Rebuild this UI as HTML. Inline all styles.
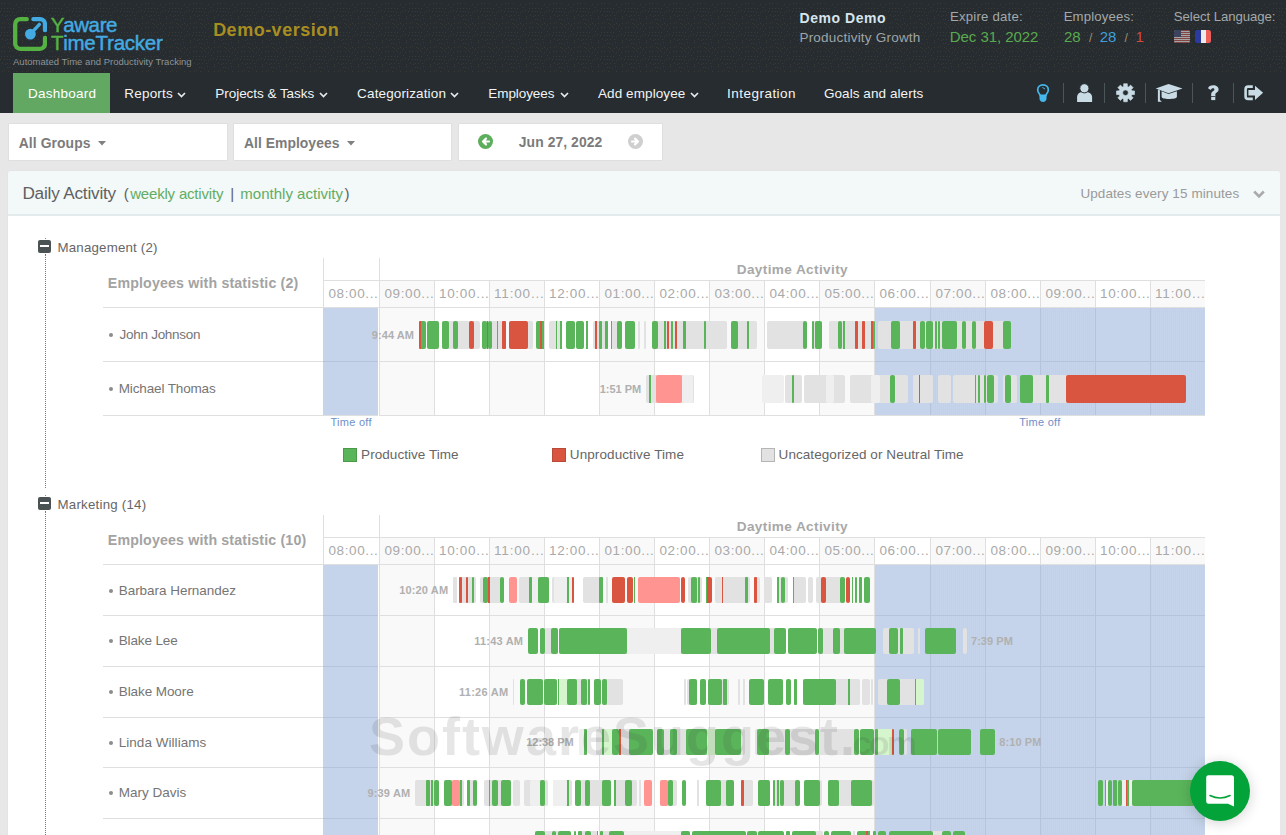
<!DOCTYPE html><html><head><meta charset="utf-8"><style>
*{margin:0;padding:0;box-sizing:border-box}
html,body{width:1286px;height:835px;overflow:hidden;background:#e7e7e7;font-family:"Liberation Sans",sans-serif}
.t{position:absolute;white-space:nowrap}
.r{position:absolute}
.a{position:absolute}
</style></head><body>
<div class="r" style="left:0px;top:0px;width:1286px;height:113px;background:#262c2f;"></div><svg class="a" style="left:0;top:3px" width="1286" height="69"><defs><pattern id="dp" width="24" height="24" patternUnits="userSpaceOnUse"><g fill="#3a3934"><rect x="1" y="0" width="1" height="1"/><rect x="4" y="0" width="1" height="1"/><rect x="9" y="0" width="1" height="1"/><rect x="12" y="23" width="1" height="1"/><rect x="16" y="1" width="1" height="1"/><rect x="18" y="23" width="1" height="1"/><rect x="21" y="1" width="1" height="1"/><rect x="1" y="5" width="1" height="1"/><rect x="4" y="5" width="1" height="1"/><rect x="7" y="5" width="1" height="1"/><rect x="10" y="5" width="1" height="1"/><rect x="13" y="5" width="1" height="1"/><rect x="19" y="4" width="1" height="1"/><rect x="0" y="8" width="1" height="1"/><rect x="4" y="8" width="1" height="1"/><rect x="7" y="8" width="1" height="1"/><rect x="9" y="8" width="1" height="1"/><rect x="12" y="9" width="1" height="1"/><rect x="16" y="9" width="1" height="1"/><rect x="18" y="8" width="1" height="1"/><rect x="21" y="7" width="1" height="1"/><rect x="2" y="12" width="1" height="1"/><rect x="5" y="13" width="1" height="1"/><rect x="7" y="12" width="1" height="1"/><rect x="10" y="12" width="1" height="1"/><rect x="14" y="12" width="1" height="1"/><rect x="22" y="13" width="1" height="1"/><rect x="7" y="16" width="1" height="1"/><rect x="9" y="16" width="1" height="1"/><rect x="12" y="17" width="1" height="1"/><rect x="15" y="15" width="1" height="1"/><rect x="22" y="15" width="1" height="1"/><rect x="2" y="20" width="1" height="1"/><rect x="4" y="19" width="1" height="1"/><rect x="8" y="20" width="1" height="1"/><rect x="10" y="21" width="1" height="1"/><rect x="14" y="21" width="1" height="1"/><rect x="16" y="20" width="1" height="1"/><rect x="19" y="21" width="1" height="1"/><rect x="22" y="20" width="1" height="1"/></g></pattern></defs><rect width="1286" height="69" fill="url(#dp)"/></svg><svg class="a" style="left:13px;top:17px" width="34" height="34" viewBox="0 0 34 34">
<path d="M13.8 2.15 H7.2 A5 5 0 0 0 2.2 7.15 V26.8 A5 5 0 0 0 7.2 31.8 H27 A5 5 0 0 0 32 26.8 V20.8" fill="none" stroke="#56b143" stroke-width="4.3" stroke-linecap="round"/>
<path d="M20.4 2.15 H27 A5 5 0 0 1 32 7.15 V13.2" fill="none" stroke="#43aae2" stroke-width="4.3" stroke-linecap="round"/>
<line x1="17.4" y1="17.1" x2="26.4" y2="7.4" stroke="#43aae2" stroke-width="3.4" stroke-linecap="round"/>
<circle cx="17.4" cy="17.1" r="5.4" fill="#43aae2"/>
</svg><div class="t" style="left:50.79px;top:12.25px;font-size:20.5px;line-height:25px;color:#56b143;-webkit-text-stroke:0.45px currentColor;">Y</div><div class="t" style="left:63.18px;top:12.25px;font-size:20.5px;line-height:25px;color:#43aae2;letter-spacing:-0.380px;-webkit-text-stroke:0.45px currentColor;">aware</div><div class="t" style="left:50.89px;top:30.25px;font-size:20.5px;line-height:25px;color:#56b143;-webkit-text-stroke:0.45px currentColor;">T</div><div class="t" style="left:63.17px;top:30.25px;font-size:20.5px;line-height:25px;color:#43aae2;letter-spacing:-0.227px;-webkit-text-stroke:0.45px currentColor;">imeTracker</div><div class="t" style="left:13.00px;top:56.25px;font-size:9.5px;line-height:11px;color:#8d9599;letter-spacing:0.018px;">Automated Time and Productivity Tracking</div><div class="t" style="left:213.13px;top:19.25px;font-size:18px;line-height:22px;color:#a88e22;font-weight:bold;letter-spacing:0.499px;">Demo-version</div><div class="t" style="left:799.59px;top:9.75px;font-size:14px;line-height:17px;color:#d6e5ee;font-weight:bold;letter-spacing:0.535px;">Demo Demo</div><div class="t" style="left:799.42px;top:29.75px;font-size:13.5px;line-height:16px;color:#9fa5a8;letter-spacing:0.217px;">Productivity Growth</div><div class="t" style="left:949.94px;top:8.75px;font-size:13.2px;line-height:16px;color:#a3a9ab;letter-spacing:0.211px;">Expire date:</div><div class="t" style="left:949.80px;top:27.75px;font-size:15px;line-height:18px;color:#5aaa4f;letter-spacing:-0.055px;">Dec 31, 2022</div><div class="t" style="left:1063.64px;top:8.75px;font-size:13.2px;line-height:16px;color:#a3a9ab;letter-spacing:0.149px;">Employees:</div><div class="t" style="left:1063.95px;top:27.75px;font-size:15px;line-height:18px;color:#5aaa4f;">28</div><div class="t" style="left:1089.00px;top:31.25px;font-size:12px;line-height:14px;color:#a08f70;">/</div><div class="t" style="left:1099.75px;top:27.75px;font-size:15px;line-height:18px;color:#3f9fdc;">28</div><div class="t" style="left:1124.50px;top:31.25px;font-size:12px;line-height:14px;color:#a08f70;">/</div><div class="t" style="left:1135.38px;top:27.75px;font-size:15px;line-height:18px;color:#d44a3e;">1</div><div class="t" style="left:1173.81px;top:8.75px;font-size:13.2px;line-height:16px;color:#a3a9ab;letter-spacing:-0.061px;">Select Language:</div><svg class="a" style="left:1174px;top:30px;opacity:0.62" width="16" height="13" viewBox="0 0 16 13">
<defs><clipPath id="cf1"><rect x="0" y="0" width="16" height="13" rx="2.5"/></clipPath></defs>
<g clip-path="url(#cf1)"><rect width="16" height="13" fill="#f2eeee"/>
<rect y="0" width="16" height="1" fill="#b8544e"/><rect y="2" width="16" height="1" fill="#b8544e"/><rect y="4" width="16" height="1" fill="#b8544e"/><rect y="6" width="16" height="1" fill="#b8544e"/><rect y="8" width="16" height="1" fill="#b8544e"/><rect y="10" width="16" height="1" fill="#b8544e"/><rect y="12" width="16" height="1" fill="#b8544e"/>
<rect width="7" height="7" fill="#47507a"/></g></svg><svg class="a" style="left:1195px;top:30px" width="16" height="13" viewBox="0 0 16 13">
<defs><clipPath id="cf2"><rect x="0" y="0" width="16" height="13" rx="2.5"/></clipPath></defs>
<g clip-path="url(#cf2)"><rect width="6" height="13" fill="#2a3a9e"/><rect x="6" width="5" height="13" fill="#ececec"/><rect x="11" width="5" height="13" fill="#ec5f5a"/></g></svg><div class="r" style="left:13px;top:73px;width:97px;height:40px;background:#62a862;"></div><div class="t" style="left:27.92px;top:85.75px;font-size:13.5px;line-height:16px;color:#ffffff;letter-spacing:0.243px;">Dashboard</div><div class="t" style="left:124.32px;top:85.75px;font-size:13.5px;line-height:16px;color:#f2f4f5;letter-spacing:0.184px;">Reports</div><svg class="a" style="left:177px;top:91.5px" width="9" height="6" viewBox="0 0 9 6"><path d="M1 1 L4.5 4.5 L8 1" fill="none" stroke="#e8eaeb" stroke-width="1.7"/></svg><div class="t" style="left:215.32px;top:85.75px;font-size:13.5px;line-height:16px;color:#f2f4f5;letter-spacing:-0.041px;">Projects &amp; Tasks</div><svg class="a" style="left:319.4px;top:91.5px" width="9" height="6" viewBox="0 0 9 6"><path d="M1 1 L4.5 4.5 L8 1" fill="none" stroke="#e8eaeb" stroke-width="1.7"/></svg><div class="t" style="left:357.12px;top:85.75px;font-size:13.5px;line-height:16px;color:#f2f4f5;letter-spacing:0.134px;">Categorization</div><svg class="a" style="left:450px;top:91.5px" width="9" height="6" viewBox="0 0 9 6"><path d="M1 1 L4.5 4.5 L8 1" fill="none" stroke="#e8eaeb" stroke-width="1.7"/></svg><div class="t" style="left:488.32px;top:85.75px;font-size:13.5px;line-height:16px;color:#f2f4f5;letter-spacing:-0.076px;">Employees</div><svg class="a" style="left:559.6px;top:91.5px" width="9" height="6" viewBox="0 0 9 6"><path d="M1 1 L4.5 4.5 L8 1" fill="none" stroke="#e8eaeb" stroke-width="1.7"/></svg><div class="t" style="left:598.00px;top:85.75px;font-size:13.5px;line-height:16px;color:#f2f4f5;letter-spacing:0.086px;">Add employee</div><svg class="a" style="left:690px;top:91.5px" width="9" height="6" viewBox="0 0 9 6"><path d="M1 1 L4.5 4.5 L8 1" fill="none" stroke="#e8eaeb" stroke-width="1.7"/></svg><div class="t" style="left:727.08px;top:85.75px;font-size:13.5px;line-height:16px;color:#f2f4f5;letter-spacing:0.470px;">Integration</div><div class="t" style="left:823.93px;top:85.75px;font-size:13.5px;line-height:16px;color:#f2f4f5;letter-spacing:0.071px;">Goals and alerts</div><div class="r" style="left:1063px;top:83px;width:1px;height:20px;background:#4e5559;"></div><div class="r" style="left:1104px;top:83px;width:1px;height:20px;background:#4e5559;"></div><div class="r" style="left:1145px;top:83px;width:1px;height:20px;background:#4e5559;"></div><div class="r" style="left:1192px;top:83px;width:1px;height:20px;background:#4e5559;"></div><div class="r" style="left:1233px;top:83px;width:1px;height:20px;background:#4e5559;"></div><svg class="a" style="left:1035px;top:83px" width="16" height="20" viewBox="0 0 16 20">
<path d="M8 1.9 C4.6 1.9 2.7 4.3 2.7 6.9 C2.7 9 3.9 10.2 4.9 11.6 L5 12.4 H11 L11.1 11.6 C12.1 10.2 13.3 9 13.3 6.9 C13.3 4.3 11.4 1.9 8 1.9 Z" fill="none" stroke="#45b7ec" stroke-width="1.7"/>
<path d="M4.5 12.4 H11.5 V15.6 C11.5 17.6 10 19 8 19 C6 19 4.5 17.6 4.5 15.6 Z" fill="#45b7ec"/>
<path d="M7.4 4.4 L10 6" stroke="#45b7ec" stroke-width="1"/>
</svg><svg class="a" style="left:1076px;top:83px" width="18" height="20" viewBox="0 0 18 20">
<path d="M1.1 19 V14.2 C1.1 11.5 3 9.2 5.6 9.2 H11.2 C13.8 9.2 16.1 11.5 16.1 14.2 V19 Z" fill="#c9dce5"/>
<circle cx="8.4" cy="5.3" r="4.6" fill="#c9dce5" stroke="#262c2f" stroke-width="1"/>
</svg><svg class="a" style="left:1116px;top:83px" width="19" height="20" viewBox="0 0 19 20">
<path fill-rule="evenodd" d="M18.52,7.92 L18.52,11.58 L15.82,11.64 L15.31,12.89 L17.17,14.83 L14.58,17.42 L12.64,15.56 L11.39,16.07 L11.33,18.77 L7.67,18.77 L7.61,16.07 L6.36,15.56 L4.42,17.42 L1.83,14.83 L3.69,12.89 L3.18,11.64 L0.48,11.58 L0.48,7.92 L3.18,7.86 L3.69,6.61 L1.83,4.67 L4.42,2.08 L6.36,3.94 L7.61,3.43 L7.67,0.73 L11.33,0.73 L11.39,3.43 L12.64,3.94 L14.58,2.08 L17.17,4.67 L15.31,6.61 L15.82,7.86 Z M12.3,9.75 A2.8 2.8 0 1 0 6.7,9.75 A2.8 2.8 0 1 0 12.3,9.75 Z" fill="#c9dce5" stroke="#c9dce5" stroke-width="0.6" stroke-linejoin="round"/>
</svg><svg class="a" style="left:1155px;top:83px" width="28" height="20" viewBox="0 0 28 20">
<path d="M0.7 5.6 L13.5 1 L27.5 5.6 L13.5 10.3 Z" fill="#c9dce5"/>
<path d="M6.6 8.3 L13.5 10.9 L21.9 8.3 V13.7 C21.9 15.4 18 15.9 13.8 15.9 C9.5 15.9 6.6 15.2 6.6 13.7 Z" fill="#c9dce5"/>
<path d="M2.9 6.5 L2.9 18.8 H6.9 L4.9 17 V7.3 Z" fill="#c9dce5"/>
</svg><svg class="a" style="left:1206px;top:83px" width="15" height="20" viewBox="0 0 15 20">
<path d="M2 5.2 C2.6 3.2 4.5 2.2 7.3 2.2 C10.4 2.2 12.6 3.9 12.6 6.5 C12.6 9.2 9.6 9.8 9.3 11.4 V12.6 H5.2 V11 C5.2 8.6 8.4 7.9 8.4 6.5 C8.4 5.6 7.8 5.3 7 5.3 C6 5.3 5.3 6 4.7 6.9 Z" fill="#c9dce5"/>
<rect x="5.2" y="12" width="4.1" height="5.1" fill="#c9dce5"/><rect x="5" y="13.1" width="4.5" height="0.9" fill="#3a4144"/>
</svg><svg class="a" style="left:1243px;top:83px" width="22" height="20" viewBox="0 0 22 20">
<path d="M9.8 3.6 H5.2 C3.8 3.6 2.6 4.7 2.6 6.2 V13.4 C2.6 14.9 3.8 15.9 5.2 15.9 H9.8" fill="none" stroke="#c9dce5" stroke-width="2.6"/>
<path d="M5.4 7 H12 V2.7 L20.1 9.7 L12 17.1 V12.6 H5.4 Z" fill="#c9dce5"/>
</svg><div class="r" style="left:8px;top:123px;width:220px;height:38px;background:#fff;border:1px solid #dfdfdf;border-radius:1px"></div><div class="r" style="left:233px;top:123px;width:219px;height:38px;background:#fff;border:1px solid #dfdfdf;border-radius:1px"></div><div class="r" style="left:458px;top:123px;width:205px;height:38px;background:#fff;border:1px solid #dfdfdf;border-radius:1px"></div><div class="t" style="left:18.65px;top:134.75px;font-size:13.9px;line-height:17px;color:#7b7b7b;font-weight:bold;letter-spacing:0.097px;">All Groups</div><svg class="a" style="left:98px;top:140.7px" width="8" height="5" viewBox="0 0 8 5"><path d="M0 0 H8 L4 4.5 Z" fill="#808080"/></svg><div class="t" style="left:243.95px;top:134.75px;font-size:13.9px;line-height:17px;color:#7b7b7b;font-weight:bold;letter-spacing:0.041px;">All Employees</div><svg class="a" style="left:347px;top:140.7px" width="8" height="5" viewBox="0 0 8 5"><path d="M0 0 H8 L4 4.5 Z" fill="#808080"/></svg><div class="t" style="left:518.79px;top:133.75px;font-size:13.9px;line-height:17px;color:#7b7b7b;font-weight:bold;letter-spacing:0.075px;">Jun 27, 2022</div><svg class="a" style="left:478px;top:134.3px" width="15" height="15" viewBox="0 0 15 15"><circle cx="7.5" cy="7.5" r="7.5" fill="#5cae5c"/><path d="M11 7.5 H5.6 M8 4.6 L5 7.5 L8 10.4" fill="none" stroke="#fff" stroke-width="2.2" stroke-linecap="round" stroke-linejoin="round"/></svg><svg class="a" style="left:628px;top:134.3px" width="15" height="15" viewBox="0 0 15 15"><circle cx="7.5" cy="7.5" r="7.5" fill="#cfcfcf"/><path d="M4 7.5 H9.4 M7 4.6 L10 7.5 L7 10.4" fill="none" stroke="#fff" stroke-width="2.2" stroke-linecap="round" stroke-linejoin="round"/></svg><div class="r" style="left:8px;top:171px;width:1272px;height:700px;background:#fff;border-radius:3px 3px 0 0;box-shadow:0 0 1px rgba(0,0,0,0.12)"></div><div class="r" style="left:8px;top:171px;width:1272px;height:45px;background:#f3f8f8;border-bottom:2px solid #e3ebed;border-radius:3px 3px 0 0"></div><div class="t" style="left:22.42px;top:182.75px;font-size:17.2px;line-height:21px;color:#606060;letter-spacing:-0.209px;">Daily Activity</div><div class="t" style="left:123.70px;top:184.75px;font-size:15px;line-height:18px;color:#606060;">(</div><div class="t" style="left:130.20px;top:184.75px;font-size:15px;line-height:18px;color:#62ad62;letter-spacing:-0.189px;">weekly activity</div><div class="t" style="left:230.35px;top:184.75px;font-size:15px;line-height:18px;color:#606060;">|</div><div class="t" style="left:240.33px;top:184.75px;font-size:15px;line-height:18px;color:#62ad62;letter-spacing:0.010px;">monthly activity</div><div class="t" style="left:344.43px;top:184.75px;font-size:15px;line-height:18px;color:#606060;">)</div><div class="t" style="left:1080.39px;top:185.75px;font-size:13.5px;line-height:16px;color:#9a9a9a;letter-spacing:0.086px;">Updates every 15 minutes</div><svg class="a" style="left:1253px;top:190px" width="12" height="9" viewBox="0 0 12 9"><path d="M1.2 1.5 L6 6.3 L10.8 1.5" fill="none" stroke="#aaaaaa" stroke-width="2.6"/></svg><div class="r" style="left:38px;top:240px;width:13px;height:13px;background:#4b5254;border-radius:2px"></div><div class="r" style="left:40px;top:245px;width:9px;height:2px;background:#fff;"></div><div class="t" style="left:57.54px;top:239.75px;font-size:13.3px;line-height:16px;color:#666666;letter-spacing:0.185px;">Management (2)</div><div class="r" style="left:45px;top:238px;width:1px;height:1px;background:#8a8a8a;"></div><div class="r" style="left:45px;top:254px;width:1px;height:234px;border-left:1px dotted #7a7a7a"></div><div class="t" style="left:107.78px;top:274.75px;font-size:14.2px;line-height:17px;color:#a3a3a3;font-weight:bold;letter-spacing:0.163px;">Employees with statistic (2)</div><div class="t" style="left:736.72px;top:261.75px;font-size:13.6px;line-height:16px;color:#a8a8a8;font-weight:bold;letter-spacing:0.375px;">Daytime Activity</div><div class="r" style="left:380px;top:281px;width:54px;height:134px;background:#f9f9f9;"></div><div class="r" style="left:490px;top:281px;width:54px;height:134px;background:#f9f9f9;"></div><div class="r" style="left:600px;top:281px;width:54px;height:134px;background:#f9f9f9;"></div><div class="r" style="left:710px;top:281px;width:54px;height:134px;background:#f9f9f9;"></div><div class="r" style="left:820px;top:281px;width:54px;height:134px;background:#f9f9f9;"></div><div class="r" style="left:931px;top:281px;width:54px;height:134px;background:#f9f9f9;"></div><div class="r" style="left:1041px;top:281px;width:54px;height:134px;background:#f9f9f9;"></div><div class="r" style="left:1151px;top:281px;width:54px;height:134px;background:#f9f9f9;"></div><div class="r" style="left:323px;top:308px;width:55px;height:107px;background:#c5d4ea;"></div><div class="r" style="left:874px;top:308px;width:331px;height:107px;background:#c5d4ea;"></div><div class="r" style="left:931px;top:308px;width:54px;height:107px;background:repeating-linear-gradient(90deg,rgba(90,110,150,0.03) 0 1px,transparent 1px 2px);"></div><div class="r" style="left:1041px;top:308px;width:54px;height:107px;background:repeating-linear-gradient(90deg,rgba(90,110,150,0.03) 0 1px,transparent 1px 2px);"></div><div class="r" style="left:1151px;top:308px;width:54px;height:107px;background:repeating-linear-gradient(90deg,rgba(90,110,150,0.03) 0 1px,transparent 1px 2px);"></div><div class="r" style="left:323px;top:280px;width:882px;height:1px;background:#dfdfdf;"></div><div class="r" style="left:103px;top:307px;width:1102px;height:1px;background:#dfdfdf;"></div><div class="r" style="left:103px;top:361px;width:220px;height:1px;background:#dfdfdf;"></div><div class="r" style="left:379px;top:361px;width:495px;height:1px;background:#dfdfdf;"></div><div class="r" style="left:323px;top:361px;width:55px;height:1px;background:#b5c3dc;"></div><div class="r" style="left:874px;top:361px;width:331px;height:1px;background:#b5c3dc;"></div><div class="r" style="left:103px;top:415px;width:220px;height:1px;background:#dfdfdf;"></div><div class="r" style="left:379px;top:415px;width:495px;height:1px;background:#dfdfdf;"></div><div class="r" style="left:323px;top:415px;width:55px;height:1px;background:#dfdfdf;"></div><div class="r" style="left:874px;top:415px;width:331px;height:1px;background:#dfdfdf;"></div><div class="r" style="left:323px;top:258px;width:1px;height:23px;background:#dfdfdf;"></div><div class="r" style="left:379px;top:258px;width:1px;height:23px;background:#dfdfdf;"></div><div class="r" style="left:323px;top:281px;width:1px;height:27px;background:#dfdfdf;"></div><div class="r" style="left:379px;top:281px;width:1px;height:134px;background:#dfdfdf;"></div><div class="r" style="left:434px;top:281px;width:1px;height:134px;background:#dfdfdf;"></div><div class="r" style="left:489px;top:281px;width:1px;height:134px;background:#dfdfdf;"></div><div class="r" style="left:544px;top:281px;width:1px;height:134px;background:#dfdfdf;"></div><div class="r" style="left:599px;top:281px;width:1px;height:134px;background:#dfdfdf;"></div><div class="r" style="left:654px;top:281px;width:1px;height:134px;background:#dfdfdf;"></div><div class="r" style="left:709px;top:281px;width:1px;height:134px;background:#dfdfdf;"></div><div class="r" style="left:764px;top:281px;width:1px;height:134px;background:#dfdfdf;"></div><div class="r" style="left:819px;top:281px;width:1px;height:134px;background:#dfdfdf;"></div><div class="r" style="left:874px;top:281px;width:1px;height:134px;background:#dfdfdf;"></div><div class="r" style="left:930px;top:281px;width:1px;height:27px;background:#dfdfdf;"></div><div class="r" style="left:930px;top:308px;width:1px;height:107px;background:#b5c3dc;"></div><div class="r" style="left:985px;top:281px;width:1px;height:27px;background:#dfdfdf;"></div><div class="r" style="left:985px;top:308px;width:1px;height:107px;background:#b5c3dc;"></div><div class="r" style="left:1040px;top:281px;width:1px;height:27px;background:#dfdfdf;"></div><div class="r" style="left:1040px;top:308px;width:1px;height:107px;background:#b5c3dc;"></div><div class="r" style="left:1095px;top:281px;width:1px;height:27px;background:#dfdfdf;"></div><div class="r" style="left:1095px;top:308px;width:1px;height:107px;background:#b5c3dc;"></div><div class="r" style="left:1150px;top:281px;width:1px;height:27px;background:#dfdfdf;"></div><div class="r" style="left:1150px;top:308px;width:1px;height:107px;background:#b5c3dc;"></div><div class="t" style="left:328.46px;top:285.75px;font-size:13.5px;line-height:16px;color:#a9a9a9;letter-spacing:0.619px;">08:00...</div><div class="t" style="left:384.46px;top:285.75px;font-size:13.5px;line-height:16px;color:#a9a9a9;letter-spacing:0.619px;">09:00...</div><div class="t" style="left:438.99px;top:285.75px;font-size:13.5px;line-height:16px;color:#a9a9a9;letter-spacing:0.686px;">10:00...</div><div class="t" style="left:493.99px;top:285.75px;font-size:13.5px;line-height:16px;color:#a9a9a9;letter-spacing:0.831px;">11:00...</div><div class="t" style="left:548.99px;top:285.75px;font-size:13.5px;line-height:16px;color:#a9a9a9;letter-spacing:0.686px;">12:00...</div><div class="t" style="left:604.46px;top:285.75px;font-size:13.5px;line-height:16px;color:#a9a9a9;letter-spacing:0.619px;">01:00...</div><div class="t" style="left:659.46px;top:285.75px;font-size:13.5px;line-height:16px;color:#a9a9a9;letter-spacing:0.619px;">02:00...</div><div class="t" style="left:714.46px;top:285.75px;font-size:13.5px;line-height:16px;color:#a9a9a9;letter-spacing:0.619px;">03:00...</div><div class="t" style="left:769.46px;top:285.75px;font-size:13.5px;line-height:16px;color:#a9a9a9;letter-spacing:0.619px;">04:00...</div><div class="t" style="left:824.46px;top:285.75px;font-size:13.5px;line-height:16px;color:#a9a9a9;letter-spacing:0.619px;">05:00...</div><div class="t" style="left:879.46px;top:285.75px;font-size:13.5px;line-height:16px;color:#a9a9a9;letter-spacing:0.619px;">06:00...</div><div class="t" style="left:935.46px;top:285.75px;font-size:13.5px;line-height:16px;color:#a9a9a9;letter-spacing:0.619px;">07:00...</div><div class="t" style="left:990.46px;top:285.75px;font-size:13.5px;line-height:16px;color:#a9a9a9;letter-spacing:0.619px;">08:00...</div><div class="t" style="left:1045.46px;top:285.75px;font-size:13.5px;line-height:16px;color:#a9a9a9;letter-spacing:0.619px;">09:00...</div><div class="t" style="left:1099.99px;top:285.75px;font-size:13.5px;line-height:16px;color:#a9a9a9;letter-spacing:0.686px;">10:00...</div><div class="t" style="left:1154.99px;top:285.75px;font-size:13.5px;line-height:16px;color:#a9a9a9;letter-spacing:0.831px;">11:00...</div><div class="r" style="left:109px;top:333px;width:4px;height:4px;background:#8c8c8c;border-radius:50%"></div><div class="t" style="left:119.60px;top:326.75px;font-size:13.5px;line-height:16px;color:#757575;letter-spacing:-0.287px;">John Johnson</div><div class="r" style="left:419.0px;top:321px;width:2.0px;height:28px;background:#d95540;border-radius:1px 0px 0px 1px"></div><div class="r" style="left:421.0px;top:321px;width:5.0px;height:28px;background:#5ab55a;border-radius:0px 2px 2px 0px"></div><div class="r" style="left:426.8px;top:321px;width:12.2px;height:28px;background:#5ab55a;border-radius:2px 2px 2px 2px"></div><div class="r" style="left:442.0px;top:321px;width:38.0px;height:28px;background:#e2e2e2;border-radius:2px"></div><div class="r" style="left:442.0px;top:321px;width:7.0px;height:28px;background:#5ab55a;border-radius:2px"></div><div class="r" style="left:453.0px;top:321px;width:5.0px;height:28px;background:#5ab55a;border-radius:2px"></div><div class="r" style="left:469.0px;top:321px;width:5.0px;height:28px;background:#d95540;border-radius:2px"></div><div class="r" style="left:482.0px;top:321px;width:23.6px;height:28px;background:#e2e2e2;border-radius:2px"></div><div class="r" style="left:482.0px;top:321px;width:5.0px;height:28px;background:#5ab55a;border-radius:2px"></div><div class="r" style="left:487.0px;top:321px;width:1.0px;height:28px;background:#d95540;border-radius:0px"></div><div class="r" style="left:488.0px;top:321px;width:4.0px;height:28px;background:#5ab55a;border-radius:2px"></div><div class="r" style="left:497.0px;top:321px;width:1.0px;height:28px;background:#5ab55a;border-radius:0px"></div><div class="r" style="left:502.0px;top:321px;width:3.6px;height:28px;background:#d95540;border-radius:1px"></div><div class="r" style="left:509.0px;top:321px;width:24.0px;height:28px;background:#e2e2e2;border-radius:2px"></div><div class="r" style="left:509.0px;top:321px;width:19.0px;height:28px;background:#d95540;border-radius:2px"></div><div class="r" style="left:535.7px;top:321px;width:4.3px;height:28px;background:#5ab55a;border-radius:2px 0px 0px 2px"></div><div class="r" style="left:540.0px;top:321px;width:2.0px;height:28px;background:#d95540;border-radius:0px 0px 0px 0px"></div><div class="r" style="left:542.0px;top:321px;width:1.7px;height:28px;background:#5ab55a;border-radius:0px 0px 0px 0px"></div><div class="r" style="left:549.0px;top:321px;width:12.6px;height:28px;background:#e2e2e2;border-radius:2px"></div><div class="r" style="left:556.0px;top:321px;width:1.0px;height:28px;background:#5ab55a;border-radius:0px"></div><div class="r" style="left:560.0px;top:321px;width:1.6px;height:28px;background:#5ab55a;border-radius:0px"></div><div class="r" style="left:566.0px;top:321px;width:9.0px;height:28px;background:#5ab55a;border-radius:2px 2px 2px 2px"></div><div class="r" style="left:576.0px;top:321px;width:8.0px;height:28px;background:#5ab55a;border-radius:2px 2px 2px 2px"></div><div class="r" style="left:585.7px;top:321px;width:1.9px;height:28px;background:#5ab55a;border-radius:0px 0px 0px 0px"></div><div class="r" style="left:593.0px;top:321px;width:15.0px;height:28px;background:#e2e2e2;border-radius:2px"></div><div class="r" style="left:595.0px;top:321px;width:1.6px;height:28px;background:#d95540;border-radius:0px"></div><div class="r" style="left:599.0px;top:321px;width:3.0px;height:28px;background:#5ab55a;border-radius:1px"></div><div class="r" style="left:605.0px;top:321px;width:3.0px;height:28px;background:#5ab55a;border-radius:1px"></div><div class="r" style="left:611.0px;top:321px;width:11.0px;height:28px;background:#e2e2e2;border-radius:2px"></div><div class="r" style="left:611.0px;top:321px;width:1.0px;height:28px;background:#5ab55a;border-radius:0px"></div><div class="r" style="left:617.0px;top:321px;width:5.0px;height:28px;background:#5ab55a;border-radius:2px"></div><div class="r" style="left:625.0px;top:321px;width:10.0px;height:28px;background:#5ab55a;border-radius:2px 2px 2px 2px"></div><div class="r" style="left:638.0px;top:321px;width:2.0px;height:28px;background:#e2e2e2;border-radius:1px 1px 1px 1px"></div><div class="r" style="left:644.0px;top:321px;width:2.0px;height:28px;background:#e2e2e2;border-radius:1px 1px 1px 1px"></div><div class="r" style="left:652.0px;top:321px;width:75.0px;height:28px;background:#e2e2e2;border-radius:2px"></div><div class="r" style="left:652.0px;top:321px;width:6.0px;height:28px;background:#5ab55a;border-radius:2px"></div><div class="r" style="left:664.0px;top:321px;width:1.6px;height:28px;background:#5ab55a;border-radius:0px"></div><div class="r" style="left:667.2px;top:321px;width:2.0px;height:28px;background:#d95540;border-radius:1px"></div><div class="r" style="left:671.0px;top:321px;width:2.0px;height:28px;background:#5ab55a;border-radius:1px"></div><div class="r" style="left:675.0px;top:321px;width:2.0px;height:28px;background:#d95540;border-radius:1px"></div><div class="r" style="left:683.0px;top:321px;width:3.0px;height:28px;background:#5ab55a;border-radius:1px"></div><div class="r" style="left:704.0px;top:321px;width:2.0px;height:28px;background:#5ab55a;border-radius:1px"></div><div class="r" style="left:731.0px;top:321px;width:26.0px;height:28px;background:#e2e2e2;border-radius:2px"></div><div class="r" style="left:731.0px;top:321px;width:7.0px;height:28px;background:#5ab55a;border-radius:2px"></div><div class="r" style="left:747.0px;top:321px;width:2.0px;height:28px;background:#5ab55a;border-radius:1px"></div><div class="r" style="left:767.0px;top:321px;width:40.0px;height:28px;background:#e2e2e2;border-radius:2px"></div><div class="r" style="left:803.0px;top:321px;width:4.0px;height:28px;background:#5ab55a;border-radius:2px"></div><div class="r" style="left:812.0px;top:321px;width:10.0px;height:28px;background:#e2e2e2;border-radius:2px"></div><div class="r" style="left:812.0px;top:321px;width:2.0px;height:28px;background:#5ab55a;border-radius:1px"></div><div class="r" style="left:815.0px;top:321px;width:7.0px;height:28px;background:#5ab55a;border-radius:2px"></div><div class="r" style="left:829.0px;top:321px;width:46.0px;height:28px;background:#e2e2e2;border-radius:2px"></div><div class="r" style="left:838.0px;top:321px;width:4.0px;height:28px;background:#5ab55a;border-radius:2px"></div><div class="r" style="left:843.3px;top:321px;width:1.7px;height:28px;background:#5ab55a;border-radius:0px"></div><div class="r" style="left:855.0px;top:321px;width:3.0px;height:28px;background:#d95540;border-radius:1px"></div><div class="r" style="left:862.0px;top:321px;width:3.0px;height:28px;background:#d95540;border-radius:1px"></div><div class="r" style="left:871.0px;top:321px;width:1.7px;height:28px;background:#d95540;border-radius:0px"></div><div class="r" style="left:872.7px;top:321px;width:2.3px;height:28px;background:#5ab55a;border-radius:1px"></div><div class="r" style="left:878.0px;top:321px;width:133.0px;height:28px;background:#e2e2e2;border-radius:2px"></div><div class="r" style="left:891.0px;top:321px;width:9.0px;height:28px;background:#5ab55a;border-radius:2px"></div><div class="r" style="left:913.0px;top:321px;width:3.0px;height:28px;background:#d95540;border-radius:1px"></div><div class="r" style="left:920.0px;top:321px;width:5.0px;height:28px;background:#5ab55a;border-radius:2px"></div><div class="r" style="left:926.0px;top:321px;width:6.6px;height:28px;background:#5ab55a;border-radius:2px"></div><div class="r" style="left:935.0px;top:321px;width:2.0px;height:28px;background:#5ab55a;border-radius:1px"></div><div class="r" style="left:938.0px;top:321px;width:2.3px;height:28px;background:#5ab55a;border-radius:1px"></div><div class="r" style="left:942.3px;top:321px;width:14.7px;height:28px;background:#5ab55a;border-radius:2px"></div><div class="r" style="left:962.0px;top:321px;width:4.0px;height:28px;background:#5ab55a;border-radius:2px"></div><div class="r" style="left:972.0px;top:321px;width:4.0px;height:28px;background:#5ab55a;border-radius:2px"></div><div class="r" style="left:984.0px;top:321px;width:9.0px;height:28px;background:#d95540;border-radius:2px"></div><div class="r" style="left:1003.0px;top:321px;width:8.0px;height:28px;background:#5ab55a;border-radius:2px"></div><div class="t" style="left:371.81px;top:328.75px;font-size:11px;line-height:13px;color:#b0b0b0;font-weight:bold;letter-spacing:0.076px;">9:44 AM</div><div class="r" style="left:109px;top:387px;width:4px;height:4px;background:#8c8c8c;border-radius:50%"></div><div class="t" style="left:118.72px;top:380.75px;font-size:13.5px;line-height:16px;color:#757575;letter-spacing:-0.136px;">Michael Thomas</div><div class="r" style="left:646.0px;top:375px;width:48.0px;height:28px;background:#e2e2e2;border-radius:2px"></div><div class="r" style="left:649.0px;top:375px;width:1.7px;height:28px;background:#5ab55a;border-radius:0px"></div><div class="r" style="left:656.0px;top:375px;width:26.0px;height:28px;background:#ff9490;border-radius:2px"></div><div class="r" style="left:682.0px;top:375px;width:10.6px;height:28px;background:#efefef;border-radius:2px"></div><div class="r" style="left:762.0px;top:375px;width:22.2px;height:28px;background:#efefef;border-radius:2px 2px 2px 2px"></div><div class="r" style="left:785.0px;top:375px;width:17.0px;height:28px;background:#e2e2e2;border-radius:2px"></div><div class="r" style="left:792.0px;top:375px;width:2.0px;height:28px;background:#5ab55a;border-radius:1px"></div><div class="r" style="left:804.4px;top:375px;width:40.4px;height:28px;background:#e2e2e2;border-radius:2px"></div><div class="r" style="left:825.7px;top:375px;width:8.5px;height:28px;background:#efefef;border-radius:2px"></div><div class="r" style="left:850.0px;top:375px;width:58.0px;height:28px;background:#e2e2e2;border-radius:2px"></div><div class="r" style="left:871.2px;top:375px;width:8.8px;height:28px;background:#efefef;border-radius:2px"></div><div class="r" style="left:890.2px;top:375px;width:5.0px;height:28px;background:#5ab55a;border-radius:2px"></div><div class="r" style="left:912.8px;top:375px;width:20.2px;height:28px;background:#e2e2e2;border-radius:2px"></div><div class="r" style="left:919.0px;top:375px;width:1.0px;height:28px;background:#d95540;border-radius:0px"></div><div class="r" style="left:938.0px;top:375px;width:13.0px;height:28px;background:#e2e2e2;border-radius:2px 2px 2px 2px"></div><div class="r" style="left:953.0px;top:375px;width:45.0px;height:28px;background:#e2e2e2;border-radius:2px"></div><div class="r" style="left:975.0px;top:375px;width:1.2px;height:28px;background:#5ab55a;border-radius:0px"></div><div class="r" style="left:978.0px;top:375px;width:2.0px;height:28px;background:#5ab55a;border-radius:1px"></div><div class="r" style="left:983.8px;top:375px;width:2.0px;height:28px;background:#5ab55a;border-radius:1px"></div><div class="r" style="left:987.0px;top:375px;width:7.0px;height:28px;background:#5ab55a;border-radius:2px"></div><div class="r" style="left:1003.3px;top:375px;width:13.7px;height:28px;background:#e2e2e2;border-radius:2px"></div><div class="r" style="left:1005.0px;top:375px;width:6.0px;height:28px;background:#5ab55a;border-radius:2px"></div><div class="r" style="left:1020.0px;top:375px;width:166.0px;height:28px;background:#e2e2e2;border-radius:2px"></div><div class="r" style="left:1020.0px;top:375px;width:13.0px;height:28px;background:#5ab55a;border-radius:2px"></div><div class="r" style="left:1046.0px;top:375px;width:3.0px;height:28px;background:#5ab55a;border-radius:1px"></div><div class="r" style="left:1066.0px;top:375px;width:120.0px;height:28px;background:#d95540;border-radius:2px"></div><div class="t" style="left:599.64px;top:382.75px;font-size:11px;line-height:13px;color:#b0b0b0;font-weight:bold;">1:51 PM</div><div class="t" style="left:330.48px;top:415.75px;font-size:11px;line-height:13px;color:#6e8fc9;letter-spacing:0.280px;">Time off</div><div class="t" style="left:1019.18px;top:415.75px;font-size:11px;line-height:13px;color:#6e8fc9;letter-spacing:0.280px;">Time off</div><div class="r" style="left:343px;top:448px;width:14px;height:14px;background:#5ab55a;border:1px solid #4a9a4a"></div><div class="t" style="left:361.12px;top:446.75px;font-size:13.5px;line-height:16px;color:#666666;letter-spacing:0.049px;">Productive Time</div><div class="r" style="left:552px;top:448px;width:14px;height:14px;background:#d95540;border:1px solid #b84a3a"></div><div class="t" style="left:569.79px;top:446.75px;font-size:13.5px;line-height:16px;color:#666666;letter-spacing:0.100px;">Unproductive Time</div><div class="r" style="left:761px;top:448px;width:14px;height:14px;background:#e2e2e2;border:1px solid #b5b5b5"></div><div class="t" style="left:778.59px;top:446.75px;font-size:13.5px;line-height:16px;color:#666666;letter-spacing:0.070px;">Uncategorized or Neutral Time</div><div class="r" style="left:38px;top:497px;width:13px;height:13px;background:#4b5254;border-radius:2px"></div><div class="r" style="left:40px;top:502px;width:9px;height:2px;background:#fff;"></div><div class="t" style="left:57.54px;top:496.75px;font-size:13.3px;line-height:16px;color:#666666;letter-spacing:0.219px;">Marketing (14)</div><div class="r" style="left:45px;top:495px;width:1px;height:1px;background:#8a8a8a;"></div><div class="r" style="left:45px;top:511px;width:1px;height:324px;border-left:1px dotted #7a7a7a"></div><div class="t" style="left:107.78px;top:531.75px;font-size:14.2px;line-height:17px;color:#a3a3a3;font-weight:bold;letter-spacing:0.159px;">Employees with statistic (10)</div><div class="t" style="left:736.72px;top:518.75px;font-size:13.6px;line-height:16px;color:#a8a8a8;font-weight:bold;letter-spacing:0.375px;">Daytime Activity</div><div class="r" style="left:380px;top:538px;width:54px;height:297px;background:#f9f9f9;"></div><div class="r" style="left:490px;top:538px;width:54px;height:297px;background:#f9f9f9;"></div><div class="r" style="left:600px;top:538px;width:54px;height:297px;background:#f9f9f9;"></div><div class="r" style="left:710px;top:538px;width:54px;height:297px;background:#f9f9f9;"></div><div class="r" style="left:820px;top:538px;width:54px;height:297px;background:#f9f9f9;"></div><div class="r" style="left:931px;top:538px;width:54px;height:297px;background:#f9f9f9;"></div><div class="r" style="left:1041px;top:538px;width:54px;height:297px;background:#f9f9f9;"></div><div class="r" style="left:1151px;top:538px;width:54px;height:297px;background:#f9f9f9;"></div><div class="r" style="left:323px;top:565px;width:55px;height:270px;background:#c5d4ea;"></div><div class="r" style="left:874px;top:565px;width:331px;height:270px;background:#c5d4ea;"></div><div class="r" style="left:931px;top:565px;width:54px;height:270px;background:repeating-linear-gradient(90deg,rgba(90,110,150,0.03) 0 1px,transparent 1px 2px);"></div><div class="r" style="left:1041px;top:565px;width:54px;height:270px;background:repeating-linear-gradient(90deg,rgba(90,110,150,0.03) 0 1px,transparent 1px 2px);"></div><div class="r" style="left:1151px;top:565px;width:54px;height:270px;background:repeating-linear-gradient(90deg,rgba(90,110,150,0.03) 0 1px,transparent 1px 2px);"></div><div class="r" style="left:323px;top:537px;width:882px;height:1px;background:#dfdfdf;"></div><div class="r" style="left:103px;top:564px;width:1102px;height:1px;background:#dfdfdf;"></div><div class="r" style="left:103px;top:615px;width:220px;height:1px;background:#dfdfdf;"></div><div class="r" style="left:379px;top:615px;width:495px;height:1px;background:#dfdfdf;"></div><div class="r" style="left:323px;top:615px;width:55px;height:1px;background:#b5c3dc;"></div><div class="r" style="left:874px;top:615px;width:331px;height:1px;background:#b5c3dc;"></div><div class="r" style="left:103px;top:666px;width:220px;height:1px;background:#dfdfdf;"></div><div class="r" style="left:379px;top:666px;width:495px;height:1px;background:#dfdfdf;"></div><div class="r" style="left:323px;top:666px;width:55px;height:1px;background:#b5c3dc;"></div><div class="r" style="left:874px;top:666px;width:331px;height:1px;background:#b5c3dc;"></div><div class="r" style="left:103px;top:717px;width:220px;height:1px;background:#dfdfdf;"></div><div class="r" style="left:379px;top:717px;width:495px;height:1px;background:#dfdfdf;"></div><div class="r" style="left:323px;top:717px;width:55px;height:1px;background:#b5c3dc;"></div><div class="r" style="left:874px;top:717px;width:331px;height:1px;background:#b5c3dc;"></div><div class="r" style="left:103px;top:767px;width:220px;height:1px;background:#dfdfdf;"></div><div class="r" style="left:379px;top:767px;width:495px;height:1px;background:#dfdfdf;"></div><div class="r" style="left:323px;top:767px;width:55px;height:1px;background:#b5c3dc;"></div><div class="r" style="left:874px;top:767px;width:331px;height:1px;background:#b5c3dc;"></div><div class="r" style="left:103px;top:818px;width:220px;height:1px;background:#dfdfdf;"></div><div class="r" style="left:379px;top:818px;width:495px;height:1px;background:#dfdfdf;"></div><div class="r" style="left:323px;top:818px;width:55px;height:1px;background:#b5c3dc;"></div><div class="r" style="left:874px;top:818px;width:331px;height:1px;background:#b5c3dc;"></div><div class="r" style="left:323px;top:515px;width:1px;height:23px;background:#dfdfdf;"></div><div class="r" style="left:379px;top:515px;width:1px;height:23px;background:#dfdfdf;"></div><div class="r" style="left:323px;top:538px;width:1px;height:27px;background:#dfdfdf;"></div><div class="r" style="left:379px;top:538px;width:1px;height:297px;background:#dfdfdf;"></div><div class="r" style="left:434px;top:538px;width:1px;height:297px;background:#dfdfdf;"></div><div class="r" style="left:489px;top:538px;width:1px;height:297px;background:#dfdfdf;"></div><div class="r" style="left:544px;top:538px;width:1px;height:297px;background:#dfdfdf;"></div><div class="r" style="left:599px;top:538px;width:1px;height:297px;background:#dfdfdf;"></div><div class="r" style="left:654px;top:538px;width:1px;height:297px;background:#dfdfdf;"></div><div class="r" style="left:709px;top:538px;width:1px;height:297px;background:#dfdfdf;"></div><div class="r" style="left:764px;top:538px;width:1px;height:297px;background:#dfdfdf;"></div><div class="r" style="left:819px;top:538px;width:1px;height:297px;background:#dfdfdf;"></div><div class="r" style="left:874px;top:538px;width:1px;height:297px;background:#dfdfdf;"></div><div class="r" style="left:930px;top:538px;width:1px;height:27px;background:#dfdfdf;"></div><div class="r" style="left:930px;top:565px;width:1px;height:270px;background:#b5c3dc;"></div><div class="r" style="left:985px;top:538px;width:1px;height:27px;background:#dfdfdf;"></div><div class="r" style="left:985px;top:565px;width:1px;height:270px;background:#b5c3dc;"></div><div class="r" style="left:1040px;top:538px;width:1px;height:27px;background:#dfdfdf;"></div><div class="r" style="left:1040px;top:565px;width:1px;height:270px;background:#b5c3dc;"></div><div class="r" style="left:1095px;top:538px;width:1px;height:27px;background:#dfdfdf;"></div><div class="r" style="left:1095px;top:565px;width:1px;height:270px;background:#b5c3dc;"></div><div class="r" style="left:1150px;top:538px;width:1px;height:27px;background:#dfdfdf;"></div><div class="r" style="left:1150px;top:565px;width:1px;height:270px;background:#b5c3dc;"></div><div class="t" style="left:328.46px;top:542.75px;font-size:13.5px;line-height:16px;color:#a9a9a9;letter-spacing:0.619px;">08:00...</div><div class="t" style="left:384.46px;top:542.75px;font-size:13.5px;line-height:16px;color:#a9a9a9;letter-spacing:0.619px;">09:00...</div><div class="t" style="left:438.99px;top:542.75px;font-size:13.5px;line-height:16px;color:#a9a9a9;letter-spacing:0.686px;">10:00...</div><div class="t" style="left:493.99px;top:542.75px;font-size:13.5px;line-height:16px;color:#a9a9a9;letter-spacing:0.831px;">11:00...</div><div class="t" style="left:548.99px;top:542.75px;font-size:13.5px;line-height:16px;color:#a9a9a9;letter-spacing:0.686px;">12:00...</div><div class="t" style="left:604.46px;top:542.75px;font-size:13.5px;line-height:16px;color:#a9a9a9;letter-spacing:0.619px;">01:00...</div><div class="t" style="left:659.46px;top:542.75px;font-size:13.5px;line-height:16px;color:#a9a9a9;letter-spacing:0.619px;">02:00...</div><div class="t" style="left:714.46px;top:542.75px;font-size:13.5px;line-height:16px;color:#a9a9a9;letter-spacing:0.619px;">03:00...</div><div class="t" style="left:769.46px;top:542.75px;font-size:13.5px;line-height:16px;color:#a9a9a9;letter-spacing:0.619px;">04:00...</div><div class="t" style="left:824.46px;top:542.75px;font-size:13.5px;line-height:16px;color:#a9a9a9;letter-spacing:0.619px;">05:00...</div><div class="t" style="left:879.46px;top:542.75px;font-size:13.5px;line-height:16px;color:#a9a9a9;letter-spacing:0.619px;">06:00...</div><div class="t" style="left:935.46px;top:542.75px;font-size:13.5px;line-height:16px;color:#a9a9a9;letter-spacing:0.619px;">07:00...</div><div class="t" style="left:990.46px;top:542.75px;font-size:13.5px;line-height:16px;color:#a9a9a9;letter-spacing:0.619px;">08:00...</div><div class="t" style="left:1045.46px;top:542.75px;font-size:13.5px;line-height:16px;color:#a9a9a9;letter-spacing:0.619px;">09:00...</div><div class="t" style="left:1099.99px;top:542.75px;font-size:13.5px;line-height:16px;color:#a9a9a9;letter-spacing:0.686px;">10:00...</div><div class="t" style="left:1154.99px;top:542.75px;font-size:13.5px;line-height:16px;color:#a9a9a9;letter-spacing:0.831px;">11:00...</div><div class="r" style="left:109px;top:589px;width:4px;height:4px;background:#8c8c8c;border-radius:50%"></div><div class="t" style="left:118.72px;top:582.75px;font-size:13.5px;line-height:16px;color:#757575;letter-spacing:-0.037px;">Barbara Hernandez</div><div class="r" style="left:453.3px;top:577px;width:3.4px;height:25.5px;background:#e2e2e2;border-radius:1px 1px 1px 1px"></div><div class="r" style="left:459.0px;top:577px;width:17.4px;height:25.5px;background:#e2e2e2;border-radius:2px"></div><div class="r" style="left:459.0px;top:577px;width:3.0px;height:25.5px;background:#d95540;border-radius:1px"></div><div class="r" style="left:466.0px;top:577px;width:2.2px;height:25.5px;background:#d95540;border-radius:1px"></div><div class="r" style="left:472.0px;top:577px;width:2.2px;height:25.5px;background:#5ab55a;border-radius:1px"></div><div class="r" style="left:480.0px;top:577px;width:23.8px;height:25.5px;background:#e2e2e2;border-radius:2px"></div><div class="r" style="left:483.2px;top:577px;width:5.2px;height:25.5px;background:#5ab55a;border-radius:2px"></div><div class="r" style="left:488.4px;top:577px;width:1.6px;height:25.5px;background:#d95540;border-radius:0px"></div><div class="r" style="left:499.8px;top:577px;width:4.0px;height:25.5px;background:#5ab55a;border-radius:2px"></div><div class="r" style="left:509.0px;top:577px;width:8.0px;height:25.5px;background:#ff9490;border-radius:2px 2px 2px 2px"></div><div class="r" style="left:519.0px;top:577px;width:30.0px;height:25.5px;background:#e2e2e2;border-radius:2px"></div><div class="r" style="left:529.0px;top:577px;width:3.0px;height:25.5px;background:#5ab55a;border-radius:1px"></div><div class="r" style="left:532.0px;top:577px;width:6.0px;height:25.5px;background:#efefef;border-radius:2px"></div><div class="r" style="left:538.0px;top:577px;width:11.0px;height:25.5px;background:#5ab55a;border-radius:2px"></div><div class="r" style="left:552.0px;top:577px;width:22.0px;height:25.5px;background:#e2e2e2;border-radius:2px"></div><div class="r" style="left:554.0px;top:577px;width:13.0px;height:25.5px;background:#efefef;border-radius:2px"></div><div class="r" style="left:567.0px;top:577px;width:1.8px;height:25.5px;background:#5ab55a;border-radius:0px"></div><div class="r" style="left:568.8px;top:577px;width:3.2px;height:25.5px;background:#efefef;border-radius:1px"></div><div class="r" style="left:572.0px;top:577px;width:2.0px;height:25.5px;background:#d95540;border-radius:1px"></div><div class="r" style="left:583.0px;top:577px;width:19.6px;height:25.5px;background:#e2e2e2;border-radius:2px"></div><div class="r" style="left:599.0px;top:577px;width:3.6px;height:25.5px;background:#5ab55a;border-radius:1px"></div><div class="r" style="left:606.0px;top:577px;width:1.7px;height:25.5px;background:#e2e2e2;border-radius:0px 0px 0px 0px"></div><div class="r" style="left:612.0px;top:577px;width:12.8px;height:25.5px;background:#d95540;border-radius:2px 2px 2px 2px"></div><div class="r" style="left:627.0px;top:577px;width:5.8px;height:25.5px;background:#d95540;border-radius:2px 2px 2px 2px"></div><div class="r" style="left:634.2px;top:577px;width:1.2px;height:25.5px;background:#5ab55a;border-radius:0px 0px 0px 0px"></div><div class="r" style="left:638.0px;top:577px;width:41.6px;height:25.5px;background:#ff9490;border-radius:2px 2px 2px 2px"></div><div class="r" style="left:680.8px;top:577px;width:4.2px;height:25.5px;background:#d95540;border-radius:2px 2px 2px 2px"></div><div class="r" style="left:688.0px;top:577px;width:14.0px;height:25.5px;background:#e2e2e2;border-radius:2px"></div><div class="r" style="left:690.7px;top:577px;width:6.5px;height:25.5px;background:#5ab55a;border-radius:2px"></div><div class="r" style="left:698.0px;top:577px;width:2.0px;height:25.5px;background:#5ab55a;border-radius:1px"></div><div class="r" style="left:706.0px;top:577px;width:1.4px;height:25.5px;background:#5ab55a;border-radius:0px 0px 0px 0px"></div><div class="r" style="left:707.4px;top:577px;width:4.6px;height:25.5px;background:#d95540;border-radius:0px 2px 2px 0px"></div><div class="r" style="left:715.0px;top:577px;width:35.0px;height:25.5px;background:#e2e2e2;border-radius:2px"></div><div class="r" style="left:721.5px;top:577px;width:1.0px;height:25.5px;background:#d95540;border-radius:0px"></div><div class="r" style="left:745.0px;top:577px;width:3.0px;height:25.5px;background:#5ab55a;border-radius:1px"></div><div class="r" style="left:754.0px;top:577px;width:6.0px;height:25.5px;background:#e2e2e2;border-radius:2px"></div><div class="r" style="left:754.0px;top:577px;width:3.0px;height:25.5px;background:#d95540;border-radius:1px"></div><div class="r" style="left:764.2px;top:577px;width:7.8px;height:25.5px;background:#e2e2e2;border-radius:2px 2px 2px 2px"></div><div class="r" style="left:777.0px;top:577px;width:11.0px;height:25.5px;background:#e2e2e2;border-radius:2px"></div><div class="r" style="left:777.0px;top:577px;width:1.8px;height:25.5px;background:#5ab55a;border-radius:0px"></div><div class="r" style="left:780.5px;top:577px;width:4.5px;height:25.5px;background:#5ab55a;border-radius:2px"></div><div class="r" style="left:793.0px;top:577px;width:12.6px;height:25.5px;background:#e2e2e2;border-radius:2px"></div><div class="r" style="left:793.0px;top:577px;width:1.2px;height:25.5px;background:#5ab55a;border-radius:0px"></div><div class="r" style="left:808.2px;top:577px;width:4.6px;height:25.5px;background:#e2e2e2;border-radius:2px 2px 2px 2px"></div><div class="r" style="left:816.2px;top:577px;width:28.9px;height:25.5px;background:#e2e2e2;border-radius:2px"></div><div class="r" style="left:821.0px;top:577px;width:5.0px;height:25.5px;background:#d95540;border-radius:2px"></div><div class="r" style="left:839.7px;top:577px;width:5.4px;height:25.5px;background:#5ab55a;border-radius:2px"></div><div class="r" style="left:846.0px;top:577px;width:4.0px;height:25.5px;background:#d95540;border-radius:2px 2px 2px 2px"></div><div class="r" style="left:851.7px;top:577px;width:1.6px;height:25.5px;background:#5ab55a;border-radius:0px 0px 0px 0px"></div><div class="r" style="left:854.8px;top:577px;width:2.4px;height:25.5px;background:#5ab55a;border-radius:1px 1px 1px 1px"></div><div class="r" style="left:859.0px;top:577px;width:3.0px;height:25.5px;background:#5ab55a;border-radius:1px 1px 1px 1px"></div><div class="r" style="left:864.0px;top:577px;width:6.0px;height:25.5px;background:#5ab55a;border-radius:2px 2px 2px 2px"></div><div class="t" style="left:399.24px;top:583.75px;font-size:11px;line-height:13px;color:#b0b0b0;font-weight:bold;letter-spacing:0.132px;">10:20 AM</div><div class="r" style="left:109px;top:639px;width:4px;height:4px;background:#8c8c8c;border-radius:50%"></div><div class="t" style="left:118.72px;top:632.75px;font-size:13.5px;line-height:16px;color:#757575;letter-spacing:-0.140px;">Blake Lee</div><div class="r" style="left:528.1px;top:628px;width:9.9px;height:26px;background:#5ab55a;border-radius:2px 2px 2px 2px"></div><div class="r" style="left:539.9px;top:628px;width:17.7px;height:26px;background:#e2e2e2;border-radius:2px"></div><div class="r" style="left:539.9px;top:628px;width:5.1px;height:26px;background:#5ab55a;border-radius:2px"></div><div class="r" style="left:551.0px;top:628px;width:6.6px;height:26px;background:#5ab55a;border-radius:2px"></div><div class="r" style="left:559.3px;top:628px;width:226.5px;height:26px;background:#e2e2e2;border-radius:2px"></div><div class="r" style="left:559.3px;top:628px;width:67.4px;height:26px;background:#5ab55a;border-radius:2px"></div><div class="r" style="left:626.7px;top:628px;width:54.5px;height:26px;background:#efefef;border-radius:2px"></div><div class="r" style="left:681.2px;top:628px;width:29.6px;height:26px;background:#5ab55a;border-radius:2px"></div><div class="r" style="left:717.0px;top:628px;width:53.0px;height:26px;background:#5ab55a;border-radius:2px"></div><div class="r" style="left:774.0px;top:628px;width:11.8px;height:26px;background:#5ab55a;border-radius:2px"></div><div class="r" style="left:788.2px;top:628px;width:28.6px;height:26px;background:#5ab55a;border-radius:2px 2px 2px 2px"></div><div class="r" style="left:818.1px;top:628px;width:57.9px;height:26px;background:#e2e2e2;border-radius:2px"></div><div class="r" style="left:818.1px;top:628px;width:5.0px;height:26px;background:#5ab55a;border-radius:2px"></div><div class="r" style="left:833.0px;top:628px;width:7.0px;height:26px;background:#5ab55a;border-radius:2px"></div><div class="r" style="left:844.2px;top:628px;width:31.8px;height:26px;background:#5ab55a;border-radius:2px"></div><div class="r" style="left:883.0px;top:628px;width:31.0px;height:26px;background:#e2e2e2;border-radius:2px"></div><div class="r" style="left:889.0px;top:628px;width:9.0px;height:26px;background:#5ab55a;border-radius:2px"></div><div class="r" style="left:900.0px;top:628px;width:3.0px;height:26px;background:#5ab55a;border-radius:1px"></div><div class="r" style="left:918.0px;top:628px;width:2.0px;height:26px;background:#e2e2e2;border-radius:1px 1px 1px 1px"></div><div class="r" style="left:925.0px;top:628px;width:31.0px;height:26px;background:#5ab55a;border-radius:2px 2px 2px 2px"></div><div class="r" style="left:963.0px;top:628px;width:4.0px;height:26px;background:#e2e2e2;border-radius:2px 2px 2px 2px"></div><div class="t" style="left:474.24px;top:634.75px;font-size:11px;line-height:13px;color:#b0b0b0;font-weight:bold;letter-spacing:0.204px;">11:43 AM</div><div class="t" style="left:970.96px;top:634.75px;font-size:11px;line-height:13px;color:#b0b0b0;font-weight:bold;letter-spacing:0.055px;">7:39 PM</div><div class="r" style="left:109px;top:690px;width:4px;height:4px;background:#8c8c8c;border-radius:50%"></div><div class="t" style="left:118.72px;top:683.75px;font-size:13.5px;line-height:16px;color:#757575;letter-spacing:-0.082px;">Blake Moore</div><div class="r" style="left:513.0px;top:679px;width:1.4px;height:26px;background:#e2e2e2;border-radius:0px 0px 0px 0px"></div><div class="r" style="left:520.0px;top:679px;width:5.0px;height:26px;background:#5ab55a;border-radius:2px 2px 2px 2px"></div><div class="r" style="left:527.0px;top:679px;width:15.8px;height:26px;background:#5ab55a;border-radius:2px 2px 2px 2px"></div><div class="r" style="left:543.9px;top:679px;width:13.1px;height:26px;background:#5ab55a;border-radius:2px 2px 2px 2px"></div><div class="r" style="left:558.2px;top:679px;width:31.8px;height:26px;background:#e2e2e2;border-radius:2px"></div><div class="r" style="left:558.2px;top:679px;width:1.0px;height:26px;background:#5ab55a;border-radius:0px"></div><div class="r" style="left:559.2px;top:679px;width:7.4px;height:26px;background:#d5f5cc;border-radius:2px"></div><div class="r" style="left:566.6px;top:679px;width:10.4px;height:26px;background:#5ab55a;border-radius:2px"></div><div class="r" style="left:581.0px;top:679px;width:5.8px;height:26px;background:#5ab55a;border-radius:2px"></div><div class="r" style="left:588.0px;top:679px;width:2.0px;height:26px;background:#5ab55a;border-radius:1px"></div><div class="r" style="left:594.0px;top:679px;width:6.8px;height:26px;background:#5ab55a;border-radius:2px 2px 2px 2px"></div><div class="r" style="left:602.0px;top:679px;width:20.6px;height:26px;background:#e2e2e2;border-radius:2px"></div><div class="r" style="left:602.0px;top:679px;width:5.3px;height:26px;background:#5ab55a;border-radius:2px"></div><div class="r" style="left:684.0px;top:679px;width:2.0px;height:26px;background:#e2e2e2;border-radius:1px 1px 1px 1px"></div><div class="r" style="left:687.0px;top:679px;width:10.0px;height:26px;background:#e2e2e2;border-radius:2px"></div><div class="r" style="left:688.7px;top:679px;width:8.3px;height:26px;background:#5ab55a;border-radius:2px"></div><div class="r" style="left:699.9px;top:679px;width:6.5px;height:26px;background:#5ab55a;border-radius:2px 2px 2px 2px"></div><div class="r" style="left:707.9px;top:679px;width:21.1px;height:26px;background:#e2e2e2;border-radius:2px"></div><div class="r" style="left:707.9px;top:679px;width:14.4px;height:26px;background:#5ab55a;border-radius:2px"></div><div class="r" style="left:723.2px;top:679px;width:3.8px;height:26px;background:#5ab55a;border-radius:1px"></div><div class="r" style="left:738.0px;top:679px;width:2.0px;height:26px;background:#e2e2e2;border-radius:1px 1px 1px 1px"></div><div class="r" style="left:742.8px;top:679px;width:1.9px;height:26px;background:#e2e2e2;border-radius:0px 0px 0px 0px"></div><div class="r" style="left:749.0px;top:679px;width:15.0px;height:26px;background:#5ab55a;border-radius:2px 2px 2px 2px"></div><div class="r" style="left:768.0px;top:679px;width:15.0px;height:26px;background:#5ab55a;border-radius:2px 2px 2px 2px"></div><div class="r" style="left:785.7px;top:679px;width:5.3px;height:26px;background:#5ab55a;border-radius:2px 2px 2px 2px"></div><div class="r" style="left:794.0px;top:679px;width:3.0px;height:26px;background:#5ab55a;border-radius:1px 1px 1px 1px"></div><div class="r" style="left:803.0px;top:679px;width:57.0px;height:26px;background:#e2e2e2;border-radius:2px"></div><div class="r" style="left:803.0px;top:679px;width:33.0px;height:26px;background:#5ab55a;border-radius:2px"></div><div class="r" style="left:848.2px;top:679px;width:1.8px;height:26px;background:#5ab55a;border-radius:0px"></div><div class="r" style="left:862.2px;top:679px;width:7.5px;height:26px;background:#e2e2e2;border-radius:2px 2px 2px 2px"></div><div class="r" style="left:871.2px;top:679px;width:2.2px;height:26px;background:#e2e2e2;border-radius:1px 1px 1px 1px"></div><div class="r" style="left:878.0px;top:679px;width:45.8px;height:26px;background:#e2e2e2;border-radius:2px"></div><div class="r" style="left:887.0px;top:679px;width:13.0px;height:26px;background:#5ab55a;border-radius:2px"></div><div class="r" style="left:915.2px;top:679px;width:1.1px;height:26px;background:#5ab55a;border-radius:0px"></div><div class="r" style="left:916.3px;top:679px;width:7.5px;height:26px;background:#d5f5cc;border-radius:2px"></div><div class="t" style="left:459.04px;top:685.75px;font-size:11px;line-height:13px;color:#b0b0b0;font-weight:bold;letter-spacing:0.247px;">11:26 AM</div><div class="r" style="left:109px;top:741px;width:4px;height:4px;background:#8c8c8c;border-radius:50%"></div><div class="t" style="left:118.72px;top:734.75px;font-size:13.5px;line-height:16px;color:#757575;letter-spacing:0.042px;">Linda Williams</div><div class="r" style="left:579.0px;top:729px;width:7.7px;height:26px;background:#e2e2e2;border-radius:2px"></div><div class="r" style="left:579.0px;top:729px;width:5.0px;height:26px;background:#efefef;border-radius:2px"></div><div class="r" style="left:584.0px;top:729px;width:2.7px;height:26px;background:#5ab55a;border-radius:1px"></div><div class="r" style="left:596.0px;top:729px;width:57.0px;height:26px;background:#e2e2e2;border-radius:2px"></div><div class="r" style="left:601.6px;top:729px;width:2.2px;height:26px;background:#5ab55a;border-radius:1px"></div><div class="r" style="left:603.8px;top:729px;width:8.2px;height:26px;background:#d5f5cc;border-radius:2px"></div><div class="r" style="left:612.0px;top:729px;width:7.3px;height:26px;background:#5ab55a;border-radius:2px"></div><div class="r" style="left:619.3px;top:729px;width:1.3px;height:26px;background:#d95540;border-radius:0px"></div><div class="r" style="left:628.7px;top:729px;width:24.3px;height:26px;background:#5ab55a;border-radius:2px"></div><div class="r" style="left:656.6px;top:729px;width:88.7px;height:26px;background:#e2e2e2;border-radius:2px"></div><div class="r" style="left:656.6px;top:729px;width:7.0px;height:26px;background:#5ab55a;border-radius:2px"></div><div class="r" style="left:669.7px;top:729px;width:7.5px;height:26px;background:#5ab55a;border-radius:2px"></div><div class="r" style="left:685.6px;top:729px;width:21.4px;height:26px;background:#5ab55a;border-radius:2px"></div><div class="r" style="left:707.0px;top:729px;width:8.4px;height:26px;background:#d5f5cc;border-radius:2px"></div><div class="r" style="left:715.4px;top:729px;width:25.8px;height:26px;background:#5ab55a;border-radius:2px"></div><div class="r" style="left:754.6px;top:729px;width:104.4px;height:26px;background:#e2e2e2;border-radius:2px"></div><div class="r" style="left:757.4px;top:729px;width:11.6px;height:26px;background:#5ab55a;border-radius:2px"></div><div class="r" style="left:785.2px;top:729px;width:4.8px;height:26px;background:#5ab55a;border-radius:2px"></div><div class="r" style="left:815.0px;top:729px;width:4.4px;height:26px;background:#5ab55a;border-radius:2px"></div><div class="r" style="left:854.3px;top:729px;width:4.7px;height:26px;background:#5ab55a;border-radius:2px"></div><div class="r" style="left:860.2px;top:729px;width:13.6px;height:26px;background:#5ab55a;border-radius:2px 2px 2px 2px"></div><div class="r" style="left:875.0px;top:729px;width:19.0px;height:26px;background:#e2e2e2;border-radius:2px"></div><div class="r" style="left:875.0px;top:729px;width:3.0px;height:26px;background:#5ab55a;border-radius:1px"></div><div class="r" style="left:878.0px;top:729px;width:12.6px;height:26px;background:#d5f5cc;border-radius:2px"></div><div class="r" style="left:892.0px;top:729px;width:2.0px;height:26px;background:#d95540;border-radius:1px"></div><div class="r" style="left:899.0px;top:729px;width:7.5px;height:26px;background:#e2e2e2;border-radius:2px"></div><div class="r" style="left:899.0px;top:729px;width:4.7px;height:26px;background:#5ab55a;border-radius:2px"></div><div class="r" style="left:911.2px;top:729px;width:25.8px;height:26px;background:#5ab55a;border-radius:2px 2px 2px 2px"></div><div class="r" style="left:938.2px;top:729px;width:32.8px;height:26px;background:#5ab55a;border-radius:2px 2px 2px 2px"></div><div class="r" style="left:980.2px;top:729px;width:14.6px;height:26px;background:#5ab55a;border-radius:2px 2px 2px 2px"></div><div class="t" style="left:526.24px;top:735.75px;font-size:11px;line-height:13px;color:#b0b0b0;font-weight:bold;letter-spacing:-0.044px;">12:38 PM</div><div class="t" style="left:999.37px;top:735.75px;font-size:11px;line-height:13px;color:#b0b0b0;font-weight:bold;letter-spacing:0.070px;">8:10 PM</div><div class="r" style="left:109px;top:791px;width:4px;height:4px;background:#8c8c8c;border-radius:50%"></div><div class="t" style="left:118.72px;top:784.75px;font-size:13.5px;line-height:16px;color:#757575;">Mary Davis</div><div class="r" style="left:415.0px;top:780px;width:23.8px;height:26px;background:#e2e2e2;border-radius:2px"></div><div class="r" style="left:426.3px;top:780px;width:3.7px;height:26px;background:#5ab55a;border-radius:1px"></div><div class="r" style="left:431.3px;top:780px;width:1.9px;height:26px;background:#5ab55a;border-radius:0px"></div><div class="r" style="left:434.3px;top:780px;width:4.5px;height:26px;background:#5ab55a;border-radius:2px"></div><div class="r" style="left:444.0px;top:780px;width:19.5px;height:26px;background:#e2e2e2;border-radius:2px"></div><div class="r" style="left:444.0px;top:780px;width:8.0px;height:26px;background:#5ab55a;border-radius:2px"></div><div class="r" style="left:452.0px;top:780px;width:8.2px;height:26px;background:#ff9490;border-radius:2px"></div><div class="r" style="left:460.2px;top:780px;width:1.5px;height:26px;background:#5ab55a;border-radius:0px"></div><div class="r" style="left:467.0px;top:780px;width:9.6px;height:26px;background:#e2e2e2;border-radius:2px"></div><div class="r" style="left:467.0px;top:780px;width:3.1px;height:26px;background:#5ab55a;border-radius:1px"></div><div class="r" style="left:472.5px;top:780px;width:4.1px;height:26px;background:#5ab55a;border-radius:2px"></div><div class="r" style="left:484.0px;top:780px;width:26.8px;height:26px;background:#e2e2e2;border-radius:2px"></div><div class="r" style="left:488.8px;top:780px;width:0.9px;height:26px;background:#5ab55a;border-radius:0px"></div><div class="r" style="left:491.6px;top:780px;width:6.5px;height:26px;background:#5ab55a;border-radius:2px"></div><div class="r" style="left:501.0px;top:780px;width:9.8px;height:26px;background:#5ab55a;border-radius:2px"></div><div class="r" style="left:513.4px;top:780px;width:6.6px;height:26px;background:#e2e2e2;border-radius:2px 2px 2px 2px"></div><div class="r" style="left:524.2px;top:780px;width:24.3px;height:26px;background:#e2e2e2;border-radius:2px"></div><div class="r" style="left:530.0px;top:780px;width:10.0px;height:26px;background:#efefef;border-radius:2px"></div><div class="r" style="left:540.0px;top:780px;width:4.8px;height:26px;background:#5ab55a;border-radius:2px"></div><div class="r" style="left:553.0px;top:780px;width:19.4px;height:26px;background:#e2e2e2;border-radius:2px"></div><div class="r" style="left:553.0px;top:780px;width:14.2px;height:26px;background:#efefef;border-radius:2px"></div><div class="r" style="left:567.2px;top:780px;width:1.8px;height:26px;background:#5ab55a;border-radius:0px"></div><div class="r" style="left:575.2px;top:780px;width:35.6px;height:26px;background:#e2e2e2;border-radius:2px"></div><div class="r" style="left:575.2px;top:780px;width:5.6px;height:26px;background:#5ab55a;border-radius:2px"></div><div class="r" style="left:585.0px;top:780px;width:5.3px;height:26px;background:#5ab55a;border-radius:2px"></div><div class="r" style="left:602.0px;top:780px;width:8.8px;height:26px;background:#5ab55a;border-radius:2px"></div><div class="r" style="left:614.2px;top:780px;width:23.3px;height:26px;background:#e2e2e2;border-radius:2px"></div><div class="r" style="left:614.2px;top:780px;width:1.6px;height:26px;background:#5ab55a;border-radius:0px"></div><div class="r" style="left:625.2px;top:780px;width:6.7px;height:26px;background:#5ab55a;border-radius:2px"></div><div class="r" style="left:639.4px;top:780px;width:1.3px;height:26px;background:#e2e2e2;border-radius:0px 0px 0px 0px"></div><div class="r" style="left:644.0px;top:780px;width:7.9px;height:26px;background:#ff9490;border-radius:2px 2px 2px 2px"></div><div class="r" style="left:659.9px;top:780px;width:16.8px;height:26px;background:#e2e2e2;border-radius:2px"></div><div class="r" style="left:659.9px;top:780px;width:7.8px;height:26px;background:#ff9490;border-radius:2px"></div><div class="r" style="left:667.7px;top:780px;width:5.1px;height:26px;background:#5ab55a;border-radius:2px"></div><div class="r" style="left:681.7px;top:780px;width:4.1px;height:26px;background:#5ab55a;border-radius:2px 2px 2px 2px"></div><div class="r" style="left:697.2px;top:780px;width:1.5px;height:26px;background:#e2e2e2;border-radius:0px 0px 0px 0px"></div><div class="r" style="left:706.0px;top:780px;width:28.0px;height:26px;background:#e2e2e2;border-radius:2px"></div><div class="r" style="left:706.0px;top:780px;width:14.9px;height:26px;background:#5ab55a;border-radius:2px"></div><div class="r" style="left:726.0px;top:780px;width:8.0px;height:26px;background:#5ab55a;border-radius:2px"></div><div class="r" style="left:740.9px;top:780px;width:11.7px;height:26px;background:#e2e2e2;border-radius:2px"></div><div class="r" style="left:740.9px;top:780px;width:3.3px;height:26px;background:#d95540;border-radius:1px"></div><div class="r" style="left:758.2px;top:780px;width:11.8px;height:26px;background:#5ab55a;border-radius:2px 2px 2px 2px"></div><div class="r" style="left:772.8px;top:780px;width:27.0px;height:26px;background:#e2e2e2;border-radius:2px"></div><div class="r" style="left:772.8px;top:780px;width:2.2px;height:26px;background:#5ab55a;border-radius:1px"></div><div class="r" style="left:777.0px;top:780px;width:1.8px;height:26px;background:#5ab55a;border-radius:0px"></div><div class="r" style="left:780.0px;top:780px;width:4.4px;height:26px;background:#5ab55a;border-radius:2px"></div><div class="r" style="left:795.0px;top:780px;width:4.8px;height:26px;background:#5ab55a;border-radius:2px"></div><div class="r" style="left:804.1px;top:780px;width:17.6px;height:26px;background:#e2e2e2;border-radius:2px"></div><div class="r" style="left:804.1px;top:780px;width:15.9px;height:26px;background:#5ab55a;border-radius:2px"></div><div class="r" style="left:828.0px;top:780px;width:45.7px;height:26px;background:#e2e2e2;border-radius:2px"></div><div class="r" style="left:828.0px;top:780px;width:11.0px;height:26px;background:#5ab55a;border-radius:2px"></div><div class="r" style="left:851.0px;top:780px;width:21.0px;height:26px;background:#5ab55a;border-radius:2px"></div><div class="r" style="left:1097.9px;top:780px;width:5.1px;height:26px;background:#5ab55a;border-radius:2px 2px 2px 2px"></div><div class="r" style="left:1105.0px;top:780px;width:7.4px;height:26px;background:#e2e2e2;border-radius:2px"></div><div class="r" style="left:1105.0px;top:780px;width:1.0px;height:26px;background:#5ab55a;border-radius:0px"></div><div class="r" style="left:1106.0px;top:780px;width:2.2px;height:26px;background:#efefef;border-radius:1px"></div><div class="r" style="left:1108.2px;top:780px;width:4.2px;height:26px;background:#5ab55a;border-radius:2px"></div><div class="r" style="left:1113.1px;top:780px;width:3.9px;height:26px;background:#5ab55a;border-radius:1px 1px 1px 1px"></div><div class="r" style="left:1118.0px;top:780px;width:77.0px;height:26px;background:#e2e2e2;border-radius:2px"></div><div class="r" style="left:1118.0px;top:780px;width:4.2px;height:26px;background:#5ab55a;border-radius:2px"></div><div class="r" style="left:1122.2px;top:780px;width:3.8px;height:26px;background:#efefef;border-radius:1px"></div><div class="r" style="left:1126.0px;top:780px;width:1.3px;height:26px;background:#d95540;border-radius:0px"></div><div class="r" style="left:1127.3px;top:780px;width:1.9px;height:26px;background:#5ab55a;border-radius:0px"></div><div class="r" style="left:1129.2px;top:780px;width:2.8px;height:26px;background:#efefef;border-radius:1px"></div><div class="r" style="left:1132.0px;top:780px;width:63.0px;height:26px;background:#5ab55a;border-radius:2px"></div><div class="t" style="left:367.42px;top:786.75px;font-size:11px;line-height:13px;color:#b0b0b0;font-weight:bold;letter-spacing:0.176px;">9:39 AM</div><div class="r" style="left:535.0px;top:831px;width:35.8px;height:26px;background:#e2e2e2;border-radius:2px"></div><div class="r" style="left:535.0px;top:831px;width:9.8px;height:26px;background:#5ab55a;border-radius:2px"></div><div class="r" style="left:551.7px;top:831px;width:4.1px;height:26px;background:#5ab55a;border-radius:2px"></div><div class="r" style="left:558.3px;top:831px;width:12.5px;height:26px;background:#5ab55a;border-radius:2px"></div><div class="r" style="left:574.0px;top:831px;width:2.0px;height:26px;background:#5ab55a;border-radius:1px 1px 1px 1px"></div><div class="r" style="left:577.9px;top:831px;width:20.5px;height:26px;background:#e2e2e2;border-radius:2px"></div><div class="r" style="left:577.9px;top:831px;width:3.7px;height:26px;background:#5ab55a;border-radius:1px"></div><div class="r" style="left:585.3px;top:831px;width:5.7px;height:26px;background:#5ab55a;border-radius:2px"></div><div class="r" style="left:596.5px;top:831px;width:1.9px;height:26px;background:#5ab55a;border-radius:0px"></div><div class="r" style="left:600.0px;top:831px;width:89.8px;height:26px;background:#e2e2e2;border-radius:2px"></div><div class="r" style="left:600.0px;top:831px;width:3.0px;height:26px;background:#5ab55a;border-radius:1px"></div><div class="r" style="left:609.2px;top:831px;width:14.8px;height:26px;background:#5ab55a;border-radius:2px"></div><div class="r" style="left:624.0px;top:831px;width:56.9px;height:26px;background:#efefef;border-radius:2px"></div><div class="r" style="left:680.9px;top:831px;width:8.9px;height:26px;background:#5ab55a;border-radius:2px"></div><div class="r" style="left:692.0px;top:831px;width:53.6px;height:26px;background:#5ab55a;border-radius:2px 2px 2px 2px"></div><div class="r" style="left:747.0px;top:831px;width:9.8px;height:26px;background:#5ab55a;border-radius:2px 2px 2px 2px"></div><div class="r" style="left:758.3px;top:831px;width:25.6px;height:26px;background:#5ab55a;border-radius:2px 2px 2px 2px"></div><div class="r" style="left:786.3px;top:831px;width:3.7px;height:26px;background:#5ab55a;border-radius:1px 1px 1px 1px"></div><div class="r" style="left:792.3px;top:831px;width:30.7px;height:26px;background:#e2e2e2;border-radius:2px"></div><div class="r" style="left:792.3px;top:831px;width:24.2px;height:26px;background:#5ab55a;border-radius:2px"></div><div class="r" style="left:824.4px;top:831px;width:4.6px;height:26px;background:#5ab55a;border-radius:2px 2px 2px 2px"></div><div class="r" style="left:831.0px;top:831px;width:19.5px;height:26px;background:#5ab55a;border-radius:2px 2px 2px 2px"></div><div class="r" style="left:853.0px;top:831px;width:1.8px;height:26px;background:#e2e2e2;border-radius:0px 0px 0px 0px"></div><div class="r" style="left:857.2px;top:831px;width:8.8px;height:26px;background:#5ab55a;border-radius:2px 0px 0px 2px"></div><div class="r" style="left:866.0px;top:831px;width:2.4px;height:26px;background:#d95540;border-radius:0px 0px 0px 0px"></div><div class="r" style="left:868.4px;top:831px;width:1.6px;height:26px;background:#5ab55a;border-radius:0px 0px 0px 0px"></div><div class="r" style="left:872.9px;top:831px;width:3.0px;height:26px;background:#5ab55a;border-radius:1px 1px 1px 1px"></div><div class="r" style="left:878.1px;top:831px;width:7.9px;height:26px;background:#5ab55a;border-radius:2px 2px 2px 2px"></div><div class="r" style="left:889.3px;top:831px;width:61.7px;height:26px;background:#e2e2e2;border-radius:2px"></div><div class="r" style="left:889.3px;top:831px;width:43.9px;height:26px;background:#5ab55a;border-radius:2px"></div><div class="r" style="left:942.0px;top:831px;width:9.0px;height:26px;background:#5ab55a;border-radius:2px"></div><div class="r" style="left:953.1px;top:831px;width:11.8px;height:26px;background:#5ab55a;border-radius:2px 2px 2px 2px"></div><div class="t" style="left:368.88px;top:703.75px;font-size:54px;line-height:65px;color:rgba(60,60,60,0.13);font-weight:bold;letter-spacing:2.007px;">SoftwareSuggest.</div><div class="t" style="left:852.64px;top:722.75px;font-size:34px;line-height:41px;color:rgba(60,60,60,0.13);font-weight:bold;letter-spacing:-2.835px;">com</div><div class="r" style="left:1280px;top:113px;width:6px;height:722px;background:#e7e7e7;"></div><div class="r" style="left:1190px;top:761px;width:60px;height:60px;border-radius:50%;background:#03a33a;box-shadow:0 2px 14px rgba(0,0,0,0.18)"></div>
<svg class="a" style="left:1206px;top:775px" width="29" height="32" viewBox="0 0 29 32">
<path d="M2.5 0.2 H25.5 C27 0.2 28 1.2 28 2.7 V31.5 L22 28.8 H2.5 C1 28.8 0.2 27.8 0.2 26.3 V2.7 C0.2 1.2 1 0.2 2.5 0.2 Z" fill="#fff"/>
<path d="M4 20.5 Q14 25.5 24 20.5" fill="none" stroke="#03a33a" stroke-width="1.6" stroke-linecap="round"/>
</svg>
</body></html>
